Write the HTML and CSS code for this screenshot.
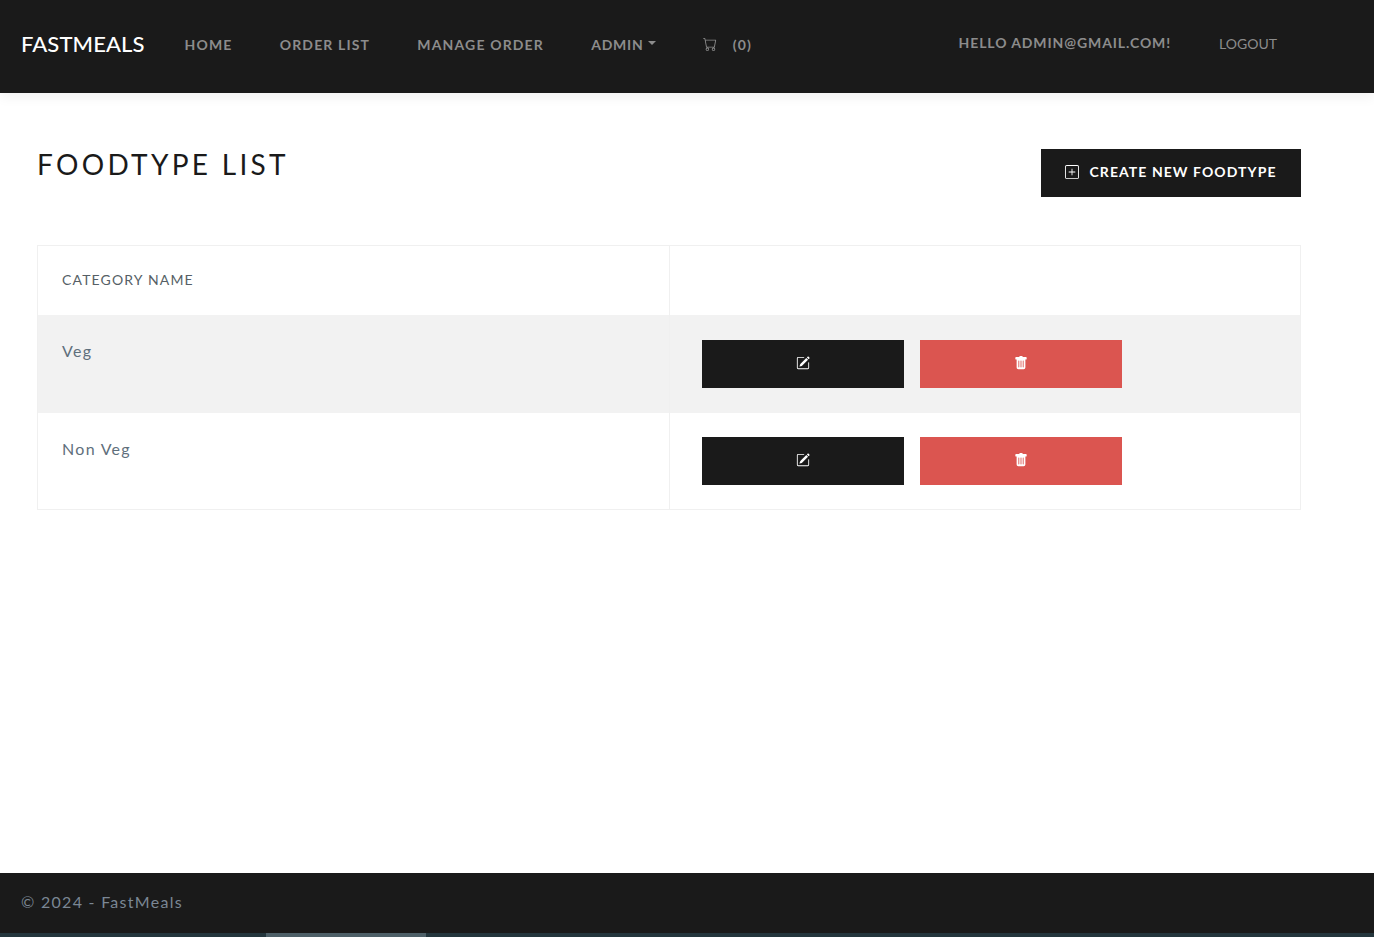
FILE: index.html
```html
<!DOCTYPE html>
<html lang="en">
<head>
<meta charset="utf-8">
<title>FastMeals</title>
<link rel="stylesheet" href="styles.css">
</head>
<body>
<div class="page">
  <nav class="navbar">
    <a class="brand" href="#">FASTMEALS</a>
    <ul class="nav-list nav-left">
      <li><a class="nav-link" href="#">HOME</a></li>
      <li><a class="nav-link" href="#">ORDER LIST</a></li>
      <li><a class="nav-link" href="#">MANAGE ORDER</a></li>
      <li><a class="nav-link admin-link" href="#">ADMIN<span class="caret"></span></a></li>
      <li><a class="nav-link cart-link" href="#">
        <svg class="icon" viewBox="0 0 16 16" fill="currentColor"><path d="M0 1.5A.5.5 0 0 1 .5 1H2a.5.5 0 0 1 .485.379L2.89 3H14.5a.5.5 0 0 1 .491.592l-1.5 8A.5.5 0 0 1 13 12H4a.5.5 0 0 1-.491-.408L2.01 3.607 1.61 2H.5a.5.5 0 0 1-.5-.5zM3.102 4l1.313 7h8.17l1.313-7H3.102zM5 12a2 2 0 1 0 0 4 2 2 0 0 0 0-4zm7 0a2 2 0 1 0 0 4 2 2 0 0 0 0-4zm-7 1a1 1 0 1 1 0 2 1 1 0 0 1 0-2zm7 0a1 1 0 1 1 0 2 1 1 0 0 1 0-2z"/></svg>
        <span>(0)</span></a></li>
    </ul>
    <ul class="nav-list nav-right">
      <li><a class="nav-link hello" href="#">HELLO ADMIN@GMAIL.COM!</a></li>
      <li><a class="nav-link logout" href="#">LOGOUT</a></li>
    </ul>
  </nav>

  <main class="content">
    <div class="heading-row">
      <h1 class="title">FOODTYPE LIST</h1>
      <a class="btn btn-create" href="#">
        <svg class="icon" viewBox="0 0 16 16" fill="currentColor"><path d="M14 1a1 1 0 0 1 1 1v12a1 1 0 0 1-1 1H2a1 1 0 0 1-1-1V2a1 1 0 0 1 1-1h12zM2 0a2 2 0 0 0-2 2v12a2 2 0 0 0 2 2h12a2 2 0 0 0 2-2V2a2 2 0 0 0-2-2H2z"/><path d="M8 4a.5.5 0 0 1 .5.5v3h3a.5.5 0 0 1 0 1h-3v3a.5.5 0 0 1-1 0v-3h-3a.5.5 0 0 1 0-1h3v-3A.5.5 0 0 1 8 4z"/></svg>
        <span class="btn-label">CREATE NEW FOODTYPE</span>
      </a>
    </div>

    <table class="list">
      <thead>
        <tr><th>CATEGORY NAME</th><th></th></tr>
      </thead>
      <tbody>
        <tr class="shaded">
          <td>Veg</td>
          <td class="actions">
            <div class="action-row">
              <a class="btn btn-action btn-dark" href="#"><svg class="icon" viewBox="0 0 16 16" fill="currentColor"><path d="M15.502 1.94a.5.5 0 0 1 0 .706L14.459 3.69l-2-2L13.502.646a.5.5 0 0 1 .707 0l1.293 1.293zm-1.75 2.456-2-2L4.939 9.21a.5.5 0 0 0-.121.196l-.805 2.414a.25.25 0 0 0 .316.316l2.414-.805a.5.5 0 0 0 .196-.12l6.813-6.814z"/><path d="M1 13.5A1.5 1.5 0 0 0 2.5 15h11a1.5 1.5 0 0 0 1.5-1.5v-6a.5.5 0 0 0-1 0v6a.5.5 0 0 1-.5.5h-11a.5.5 0 0 1-.5-.5v-11a.5.5 0 0 1 .5-.5H9a.5.5 0 0 0 0-1H2.5A1.5 1.5 0 0 0 1 2.5v11z"/></svg></a>
              <a class="btn btn-action btn-red" href="#"><svg class="icon" viewBox="0 0 16 16" fill="currentColor"><path d="M2.5 1a1 1 0 0 0-1 1v1a1 1 0 0 0 1 1H3v9a2 2 0 0 0 2 2h6a2 2 0 0 0 2-2V4h.5a1 1 0 0 0 1-1V2a1 1 0 0 0-1-1H10a1 1 0 0 0-1-1H7a1 1 0 0 0-1 1H2.5zm3 4a.5.5 0 0 1 .5.5v7a.5.5 0 0 1-1 0v-7a.5.5 0 0 1 .5-.5zM8 5a.5.5 0 0 1 .5.5v7a.5.5 0 0 1-1 0v-7A.5.5 0 0 1 8 5zm3 .5v7a.5.5 0 0 1-1 0v-7a.5.5 0 0 1 1 0z"/></svg></a>
            </div>
          </td>
        </tr>
        <tr class="plain">
          <td>Non Veg</td>
          <td class="actions">
            <div class="action-row">
              <a class="btn btn-action btn-dark" href="#"><svg class="icon" viewBox="0 0 16 16" fill="currentColor"><path d="M15.502 1.94a.5.5 0 0 1 0 .706L14.459 3.69l-2-2L13.502.646a.5.5 0 0 1 .707 0l1.293 1.293zm-1.75 2.456-2-2L4.939 9.21a.5.5 0 0 0-.121.196l-.805 2.414a.25.25 0 0 0 .316.316l2.414-.805a.5.5 0 0 0 .196-.12l6.813-6.814z"/><path d="M1 13.5A1.5 1.5 0 0 0 2.5 15h11a1.5 1.5 0 0 0 1.5-1.5v-6a.5.5 0 0 0-1 0v6a.5.5 0 0 1-.5.5h-11a.5.5 0 0 1-.5-.5v-11a.5.5 0 0 1 .5-.5H9a.5.5 0 0 0 0-1H2.5A1.5 1.5 0 0 0 1 2.5v11z"/></svg></a>
              <a class="btn btn-action btn-red" href="#"><svg class="icon" viewBox="0 0 16 16" fill="currentColor"><path d="M2.5 1a1 1 0 0 0-1 1v1a1 1 0 0 0 1 1H3v9a2 2 0 0 0 2 2h6a2 2 0 0 0 2-2V4h.5a1 1 0 0 0 1-1V2a1 1 0 0 0-1-1H10a1 1 0 0 0-1-1H7a1 1 0 0 0-1 1H2.5zm3 4a.5.5 0 0 1 .5.5v7a.5.5 0 0 1-1 0v-7a.5.5 0 0 1 .5-.5zM8 5a.5.5 0 0 1 .5.5v7a.5.5 0 0 1-1 0v-7A.5.5 0 0 1 8 5zm3 .5v7a.5.5 0 0 1-1 0v-7a.5.5 0 0 1 1 0z"/></svg></a>
            </div>
          </td>
        </tr>
      </tbody>
    </table>
  </main>

  <footer class="footer">© 2024 - FastMeals</footer>
  <div class="scroll-track"><div class="scroll-thumb"></div></div>
</div>
</body>
</html>
```

FILE: styles.css
```css
* { box-sizing: border-box; }
html, body { margin: 0; height: 100%; overflow: hidden; }
body {
  font-family: "Lato", "Open Sans", "Liberation Sans", sans-serif;
  color: #5f6f7c;
  background: #fff;
}
a { text-decoration: none; color: inherit; }
ul { list-style: none; margin: 0; padding: 0; }

.page { display: flex; flex-direction: column; height: 937px; }

.navbar {
  height: 93px;
  flex: none;
  display: flex;
  align-items: center;
  padding: 0 73px 5px 21px;
  background: #1a1a1a;
  box-shadow: 0 4px 12px rgba(0, 0, 0, .06);
  position: relative;
}
.brand { color: #fff; font-size: 22px; font-weight: 500; letter-spacing: .1px; margin-right: 16.4px; padding-bottom: 1px; }
.nav-list { display: flex; align-items: center; }
.nav-right { margin-left: auto; }
.nav-link {
  display: flex;
  align-items: center;
  padding: 0 24px;
  color: #8c8c8c;
  font-size: 14px;
  font-weight: 700;
  letter-spacing: 1px;
}
.nav-left .nav-link { padding: 0 23.6px; letter-spacing: 1.15px; }
.nav-left .admin-link { letter-spacing: .8px; }
.caret {
  width: 0;
  height: 0;
  margin-left: 4px;
  margin-bottom: 2px;
  border-top: 4px solid currentColor;
  border-left: 4px solid transparent;
  border-right: 4px solid transparent;
}
.nav-left .cart-link { gap: 16px; }
.hello { margin-bottom: 4px; letter-spacing: .9px; }
.logout { font-weight: 400; letter-spacing: 0; margin-bottom: 2px; }
.icon { width: 14px; height: 14px; display: block; flex: none; }

.content { flex: 1; padding: 56px 73px 0 37px; }
.heading-row { display: flex; justify-content: space-between; align-items: flex-start; margin-bottom: 48px; }
.title {
  margin: 0;
  color: #1a1a1a;
  font-size: 28px;
  line-height: 30px;
  font-weight: 400;
  letter-spacing: 3.3px;
}
.btn { display: flex; align-items: center; justify-content: center; height: 48px; }
.btn-create {
  width: 260px;
  gap: 10px;
  padding-bottom: 2px;
  background: #1a1a1a;
  color: #fff;
  font-size: 14px;
  font-weight: 700;
  letter-spacing: 1.07px;
}
.btn-label { padding-bottom: 2px; }

.list { width: 100%; border-collapse: collapse; table-layout: fixed; border: 1px solid #f0f0f0; }
.list th, .list td { padding: 24px; vertical-align: top; border-left: 1px solid #f0f0f0; }
.list th {
  height: 69px;
  padding: 23px 24px;
  text-align: left;
  font-size: 14px;
  line-height: 21px;
  font-weight: 400;
  letter-spacing: 1.15px;
  color: #565f66;
}
.list td { font-size: 16px; line-height: 24px; letter-spacing: 1.3px; }
.shaded { background: #f2f2f2; }
.shaded td { height: 98px; }
.plain td { height: 96px; }
.list .actions { padding: 25px 32px; }
.list .plain .actions { padding: 24px 32px; }
.action-row { display: flex; gap: 16px; }
.btn-action { width: 202px; color: #fff; padding-bottom: 2px; }
.btn-dark { background: #1a1a1a; }
.btn-red { background: #db5550; }

.footer {
  flex: none;
  height: 60px;
  display: flex;
  align-items: center;
  padding: 0 0 3px 21px;
  background: #1a1a1a;
  color: #7b8794;
  font-size: 16px;
  letter-spacing: 1.28px;
}
.scroll-track { flex: none; height: 4px; background: #24363d; }
.scroll-thumb { width: 160px; height: 4px; margin-left: 266px; background: #4e6068; }
```
